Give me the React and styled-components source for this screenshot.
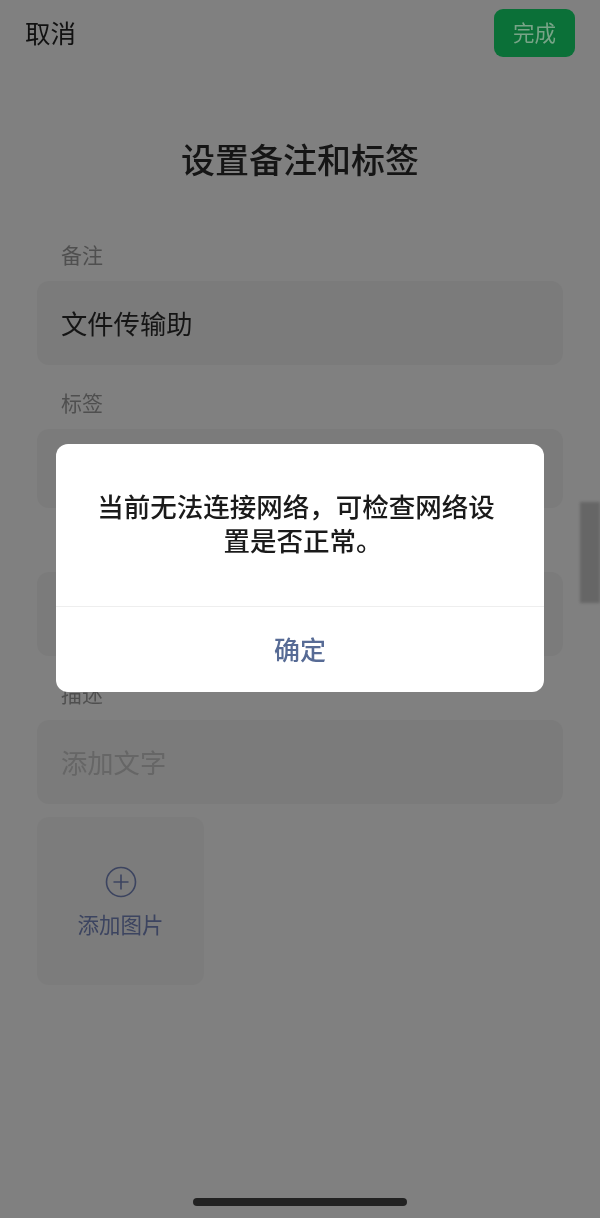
import { createGlobalStyle } from 'styled-components';
import styled from 'styled-components';

const GlobalStyle = createGlobalStyle`
  html, body {
    margin: 0;
    padding: 0;
    background: #808080;
  }

  * {
    box-sizing: border-box;
  }
`;

const Page = styled.div`
  position: relative;
  display: flex;
  flex-direction: column;
  width: 600px;
  height: 1218px;
  overflow: hidden;
  background: #808080;
  font-family: "Noto Sans CJK SC", "Noto Sans", sans-serif;
  filter: blur(0.35px);
`;

const TopBar = styled.header`
  display: flex;
  align-items: flex-start;
  justify-content: space-between;
  padding: 9px 25px 0;
`;

const CancelText = styled.span`
  font-size: 25.5px;
  line-height: 46px;
  color: #111111;
`;

const DoneButton = styled.div`
  width: 81px;
  height: 48px;
  border-radius: 9px;
  background: #0b7038;
  color: #78a487;
  font-size: 21.5px;
  line-height: 45px;
  text-align: center;
`;

const Title = styled.h1`
  margin: 78px 0 0;
  font-size: 34px;
  font-weight: 500;
  line-height: 48px;
  text-align: center;
  color: #151515;
`;

const Form = styled.div`
  display: flex;
  flex-direction: column;
  gap: 23px;
  margin-top: 57px;
  padding: 0 37px;
`;

const Field = styled.section`
  display: flex;
  flex-direction: column;
  gap: 13px;
`;

const Label = styled.label`
  min-height: 28px;
  padding-left: 24px;
  font-size: 21px;
  line-height: 28px;
  color: #4f4f4f;
`;

const InputBox = styled.div`
  height: ${(props) => props.$height || 84}px;
  padding-left: 24px;
  border-radius: 12px;
  background: #7b7b7b;
  font-size: 26.3px;
  line-height: 83px;
  color: ${(props) => (props.$placeholder ? '#666666' : '#151515')};
`;

const AddImage = styled.div`
  display: flex;
  flex-direction: column;
  align-items: center;
  width: 167px;
  height: 168px;
  margin: 13px 0 0 37px;
  padding-top: 49px;
  border-radius: 12px;
  background: #7c7c7c;
  color: #3c4460;
`;

const AddImageText = styled.span`
  margin-top: 10px;
  font-size: 21.5px;
  line-height: 32px;
`;

const HomeIndicator = styled.div`
  width: 214px;
  height: 8px;
  margin: auto auto 12px;
  border-radius: 4px;
  background: #222222;
`;

const BlurredEdge = styled.div`
  position: absolute;
  top: 502px;
  right: 0;
  width: 20px;
  height: 101px;
  background: #666666;
  filter: blur(1.5px);
`;

const Overlay = styled.div`
  position: absolute;
  inset: 0;
  display: flex;
  justify-content: center;
  align-items: flex-start;
  padding-top: 444px;
`;

const Dialog = styled.div`
  width: 488px;
  height: 248px;
  border-radius: 12px;
  background: #ffffff;
`;

const DialogBody = styled.p`
  height: 163px;
  margin: 0;
  padding: 45px 37px 0 43px;
  border-bottom: 1px solid #eeeeee;
  font-size: 26.5px;
  font-weight: 500;
  line-height: 34px;
  text-indent: -14px;
  text-align: center;
  color: #1a1a1a;
`;

const DialogAction = styled.div`
  font-size: 26px;
  font-weight: 500;
  line-height: 83px;
  text-align: center;
  color: #576b95;
`;

const PlusCircle = () => (
  <svg width="32" height="32" viewBox="0 0 32 32" fill="none" stroke="currentColor" strokeWidth="1.6">
    <circle cx="16" cy="16" r="14.5" />
    <path d="M16 8.5v15M8.5 16h15" />
  </svg>
);

export default function App() {
  return (
    <Page>
      <GlobalStyle />
      <TopBar>
        <CancelText>取消</CancelText>
        <DoneButton>完成</DoneButton>
      </TopBar>
      <Title>设置备注和标签</Title>
      <Form>
        <Field>
          <Label>备注</Label>
          <InputBox>文件传输助</InputBox>
        </Field>
        <Field>
          <Label>标签</Label>
          <InputBox $height={79} />
        </Field>
        <Field>
          <Label />
          <InputBox />
        </Field>
        <Field>
          <Label>描述</Label>
          <InputBox $placeholder>添加文字</InputBox>
        </Field>
      </Form>
      <AddImage>
        <PlusCircle />
        <AddImageText>添加图片</AddImageText>
      </AddImage>
      <HomeIndicator />
      <BlurredEdge />
      <Overlay>
        <Dialog>
          <DialogBody>当前无法连接网络，可检查网络设置是否正常。</DialogBody>
          <DialogAction>确定</DialogAction>
        </Dialog>
      </Overlay>
    </Page>
  );
}
